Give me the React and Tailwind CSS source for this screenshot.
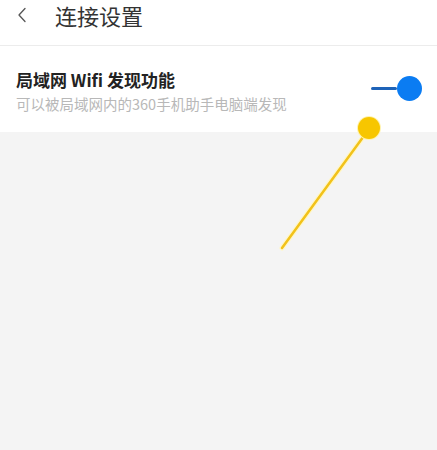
import React from 'react';

const font = { fontFamily: '"Noto Sans CJK SC", "Noto Sans", sans-serif' };

export default function App() {
  return (
    <div className="relative w-[437px] h-[450px] overflow-hidden bg-[#f4f4f4] flex flex-col" style={font}>
      {/* Header */}
      <div className="h-[46px] bg-white flex items-center border-b border-[#ececec] shadow-[0_1px_2px_rgba(0,0,0,0.04)]">
        <svg className="ml-[17px] mb-[15px]" width="10" height="16" viewBox="0 0 10 16" fill="none">
          <path d="M8 1.5 L2 8 L8 14.5" stroke="#555" strokeWidth="1.3" strokeLinecap="round" strokeLinejoin="round" />
        </svg>
        <div className="ml-[28px] mb-[16px] text-[22px] leading-none text-[#333]">连接设置</div>
      </div>

      {/* Setting row */}
      <div className="h-[86px] bg-white flex items-center justify-between pl-[16px] pr-[15px]">
        <div className="flex flex-col pt-[4px]">
          <div className="text-[17px] font-bold leading-[20px] text-[#222]">局域网 Wifi 发现功能</div>
          <div className="mt-[5px] text-[14.5px] leading-[18px] text-[#b8b8b8]">可以被局域网内的360手机助手电脑端发现</div>
        </div>
        <div className="flex items-center mb-[2px]">
          <div className="w-[26px] h-[3px] bg-[#1e63b8] rounded-full" />
          <div className="w-[25px] h-[25px] rounded-full bg-[#0b7cf2]" />
        </div>
      </div>

      <div className="flex-1" />

      {/* Annotation pointer */}
      <svg className="absolute left-0 top-0 pointer-events-none" width="437" height="450" viewBox="0 0 437 450">
        <line x1="369" y1="129" x2="282" y2="248" stroke="#fff7c8" strokeWidth="5" strokeLinecap="round" />
        <line x1="369" y1="129" x2="282" y2="248" stroke="#f2c21a" strokeWidth="2.5" strokeLinecap="round" />
        <circle cx="369" cy="128" r="12" fill="#fff3b0" />
        <circle cx="369" cy="128" r="11" fill="#f7c600" />
      </svg>
    </div>
  );
}
